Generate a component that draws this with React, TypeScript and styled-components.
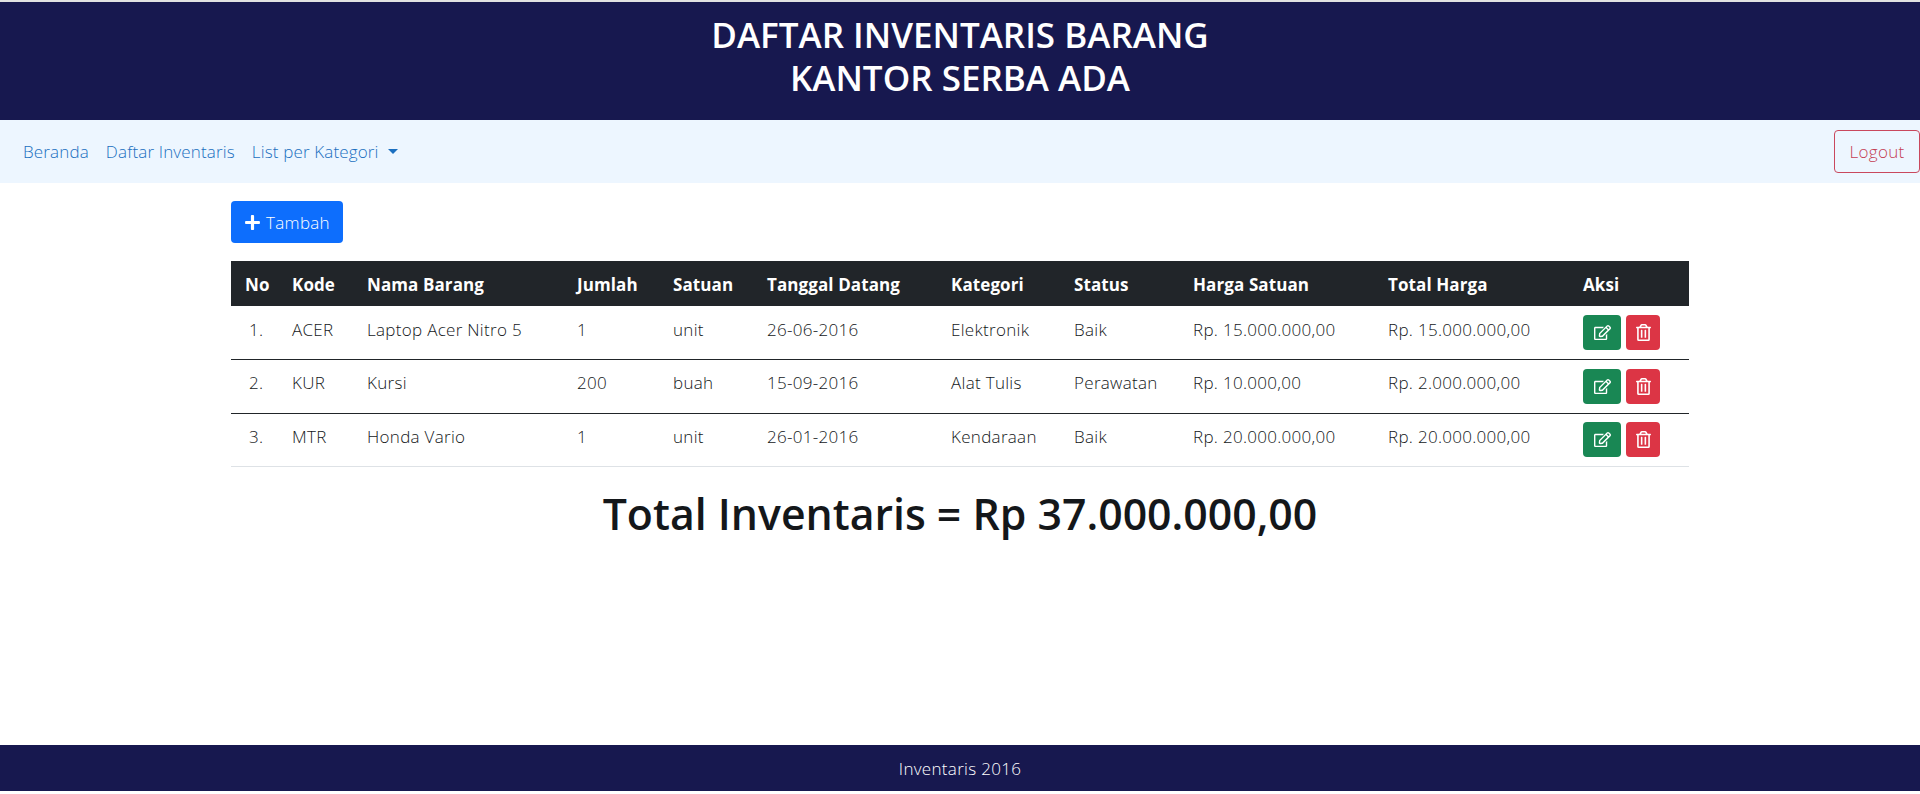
import React from 'react';
import styled, { createGlobalStyle } from 'styled-components';
import { FaPlus, FaRegEdit, FaRegTrashAlt } from 'react-icons/fa';

const GlobalStyle = createGlobalStyle`
  html, body { margin: 0; padding: 0; background: #fff; }
  body {
    font-family: "Open Sans", "Noto Sans", "Liberation Sans", sans-serif;
    font-weight: 300;
    font-size: 17px;
    letter-spacing: 0.3px;
    color: #14171a;
  }
`;

const Page = styled.div`
  height: 794px;
  display: flex;
  flex-direction: column;
  border-top: 2px solid #e2e2e2;
  padding-bottom: 3px;
  box-sizing: border-box;
`;

const Banner = styled.header`
  height: 118px;
  flex: none;
  background: #17184f;
  color: #fff;
  display: flex;
  align-items: center;
  justify-content: center;
  text-align: center;
`;

const BannerTitle = styled.h1`
  margin: 0 0 10px;
  font-size: 35px;
  font-weight: 600;
  line-height: 43px;
  letter-spacing: 0;
`;

const NavBar = styled.nav`
  height: 63px;
  flex: none;
  background: #edf6ff;
  display: flex;
  align-items: center;
  justify-content: space-between;
  padding-left: 23px;
`;

const NavLinks = styled.div`
  display: flex;
  align-items: center;
  gap: 17px;
  letter-spacing: 0.15px;
`;

const NavLink = styled.a`
  color: #1a6fc0;
  display: inline-flex;
  align-items: center;
`;

const Caret = styled.span`
  margin-left: 9px;
  border-top: 5px solid currentColor;
  border-left: 5px solid transparent;
  border-right: 5px solid transparent;
`;

const LogoutButton = styled.button`
  width: 86px;
  height: 43px;
  border: 1px solid #c9485d;
  border-radius: 4px;
  background: transparent;
  color: #c43d53;
  font: inherit;
  letter-spacing: inherit;
  padding: 0;
`;

const Main = styled.main`
  flex: 1;
  width: 1458px;
  margin: 0 auto;
  padding-top: 18px;
`;

const AddButton = styled.button`
  width: 112px;
  height: 42px;
  display: flex;
  align-items: center;
  justify-content: center;
  gap: 5px;
  border: 0;
  border-radius: 4px;
  background: #0d6efd;
  color: #fff;
  font: inherit;
  letter-spacing: inherit;
  padding: 0;
  margin-bottom: 18px;
`;

const Table = styled.table`
  width: 100%;
  table-layout: fixed;
  border-collapse: collapse;
`;

const HeadCell = styled.th`
  height: 45px;
  padding: 1px 0 0 14px;
  box-sizing: border-box;
  background: #212529;
  color: #fff;
  font-weight: 700;
  text-align: left;
  letter-spacing: 0.1px;
`;

const Row = styled.tr`
  border-bottom: 1px solid #212529;
  &:last-child { border-bottom-color: #dee2e6; }
`;

const Cell = styled.td`
  height: 53.5px;
  padding: 0 0 7px 14px;
  box-sizing: border-box;
  white-space: nowrap;
`;

const NumberCell = styled(Cell)`
  padding-left: 18px;
`;

const ActionCell = styled(Cell)`
  padding-bottom: 0;
`;

const Actions = styled.div`
  display: flex;
  gap: 5px;
`;

const IconButton = styled.button<{ $tone: string; $width: number }>`
  width: ${p => p.$width}px;
  height: 35px;
  border: 0;
  border-radius: 4px;
  background: ${p => p.$tone};
  color: #fff;
  display: flex;
  align-items: center;
  justify-content: center;
  padding: 0;
  font-size: 17px;
`;

const Total = styled.h2`
  margin: 18px 0 0;
  text-align: center;
  font-size: 42.8px;
  font-weight: 600;
  line-height: 58px;
  letter-spacing: 0;
`;

const Footer = styled.footer`
  height: 46px;
  flex: none;
  background: #17184f;
  color: #fff;
  display: flex;
  align-items: center;
  justify-content: center;
`;

const columns = [47, 75, 210, 96, 94, 184, 123, 119, 195, 195, 120];
const headers = ['No', 'Kode', 'Nama Barang', 'Jumlah', 'Satuan', 'Tanggal Datang', 'Kategori', 'Status', 'Harga Satuan', 'Total Harga', 'Aksi'];
const items = [
  ['1.', 'ACER', 'Laptop Acer Nitro 5', '1', 'unit', '26-06-2016', 'Elektronik', 'Baik', 'Rp. 15.000.000,00', 'Rp. 15.000.000,00'],
  ['2.', 'KUR', 'Kursi', '200', 'buah', '15-09-2016', 'Alat Tulis', 'Perawatan', 'Rp. 10.000,00', 'Rp. 2.000.000,00'],
  ['3.', 'MTR', 'Honda Vario', '1', 'unit', '26-01-2016', 'Kendaraan', 'Baik', 'Rp. 20.000.000,00', 'Rp. 20.000.000,00'],
];

const App: React.FC = () => (
  <Page>
    <GlobalStyle />
    <Banner>
      <BannerTitle>DAFTAR INVENTARIS BARANG<br />KANTOR SERBA ADA</BannerTitle>
    </Banner>
    <NavBar>
      <NavLinks>
        <NavLink>Beranda</NavLink>
        <NavLink>Daftar Inventaris</NavLink>
        <NavLink>List per Kategori<Caret /></NavLink>
      </NavLinks>
      <LogoutButton>Logout</LogoutButton>
    </NavBar>
    <Main>
      <AddButton><FaPlus size={17} />Tambah</AddButton>
      <Table>
        <colgroup>
          {columns.map((w, i) => <col key={i} width={w} />)}
        </colgroup>
        <thead>
          <tr>{headers.map(h => <HeadCell key={h}>{h}</HeadCell>)}</tr>
        </thead>
        <tbody>
          {items.map(item => (
            <Row key={item[0]}>
              {item.map((v, i) => i === 0
                ? <NumberCell key={i}>{v}</NumberCell>
                : <Cell key={i}>{v}</Cell>)}
              <ActionCell>
                <Actions>
                  <IconButton $tone="#198754" $width={38}><FaRegEdit /></IconButton>
                  <IconButton $tone="#dc3545" $width={34}><FaRegTrashAlt /></IconButton>
                </Actions>
              </ActionCell>
            </Row>
          ))}
        </tbody>
      </Table>
      <Total>Total Inventaris = Rp 37.000.000,00</Total>
    </Main>
    <Footer>Inventaris 2016</Footer>
  </Page>
);

export default App;
